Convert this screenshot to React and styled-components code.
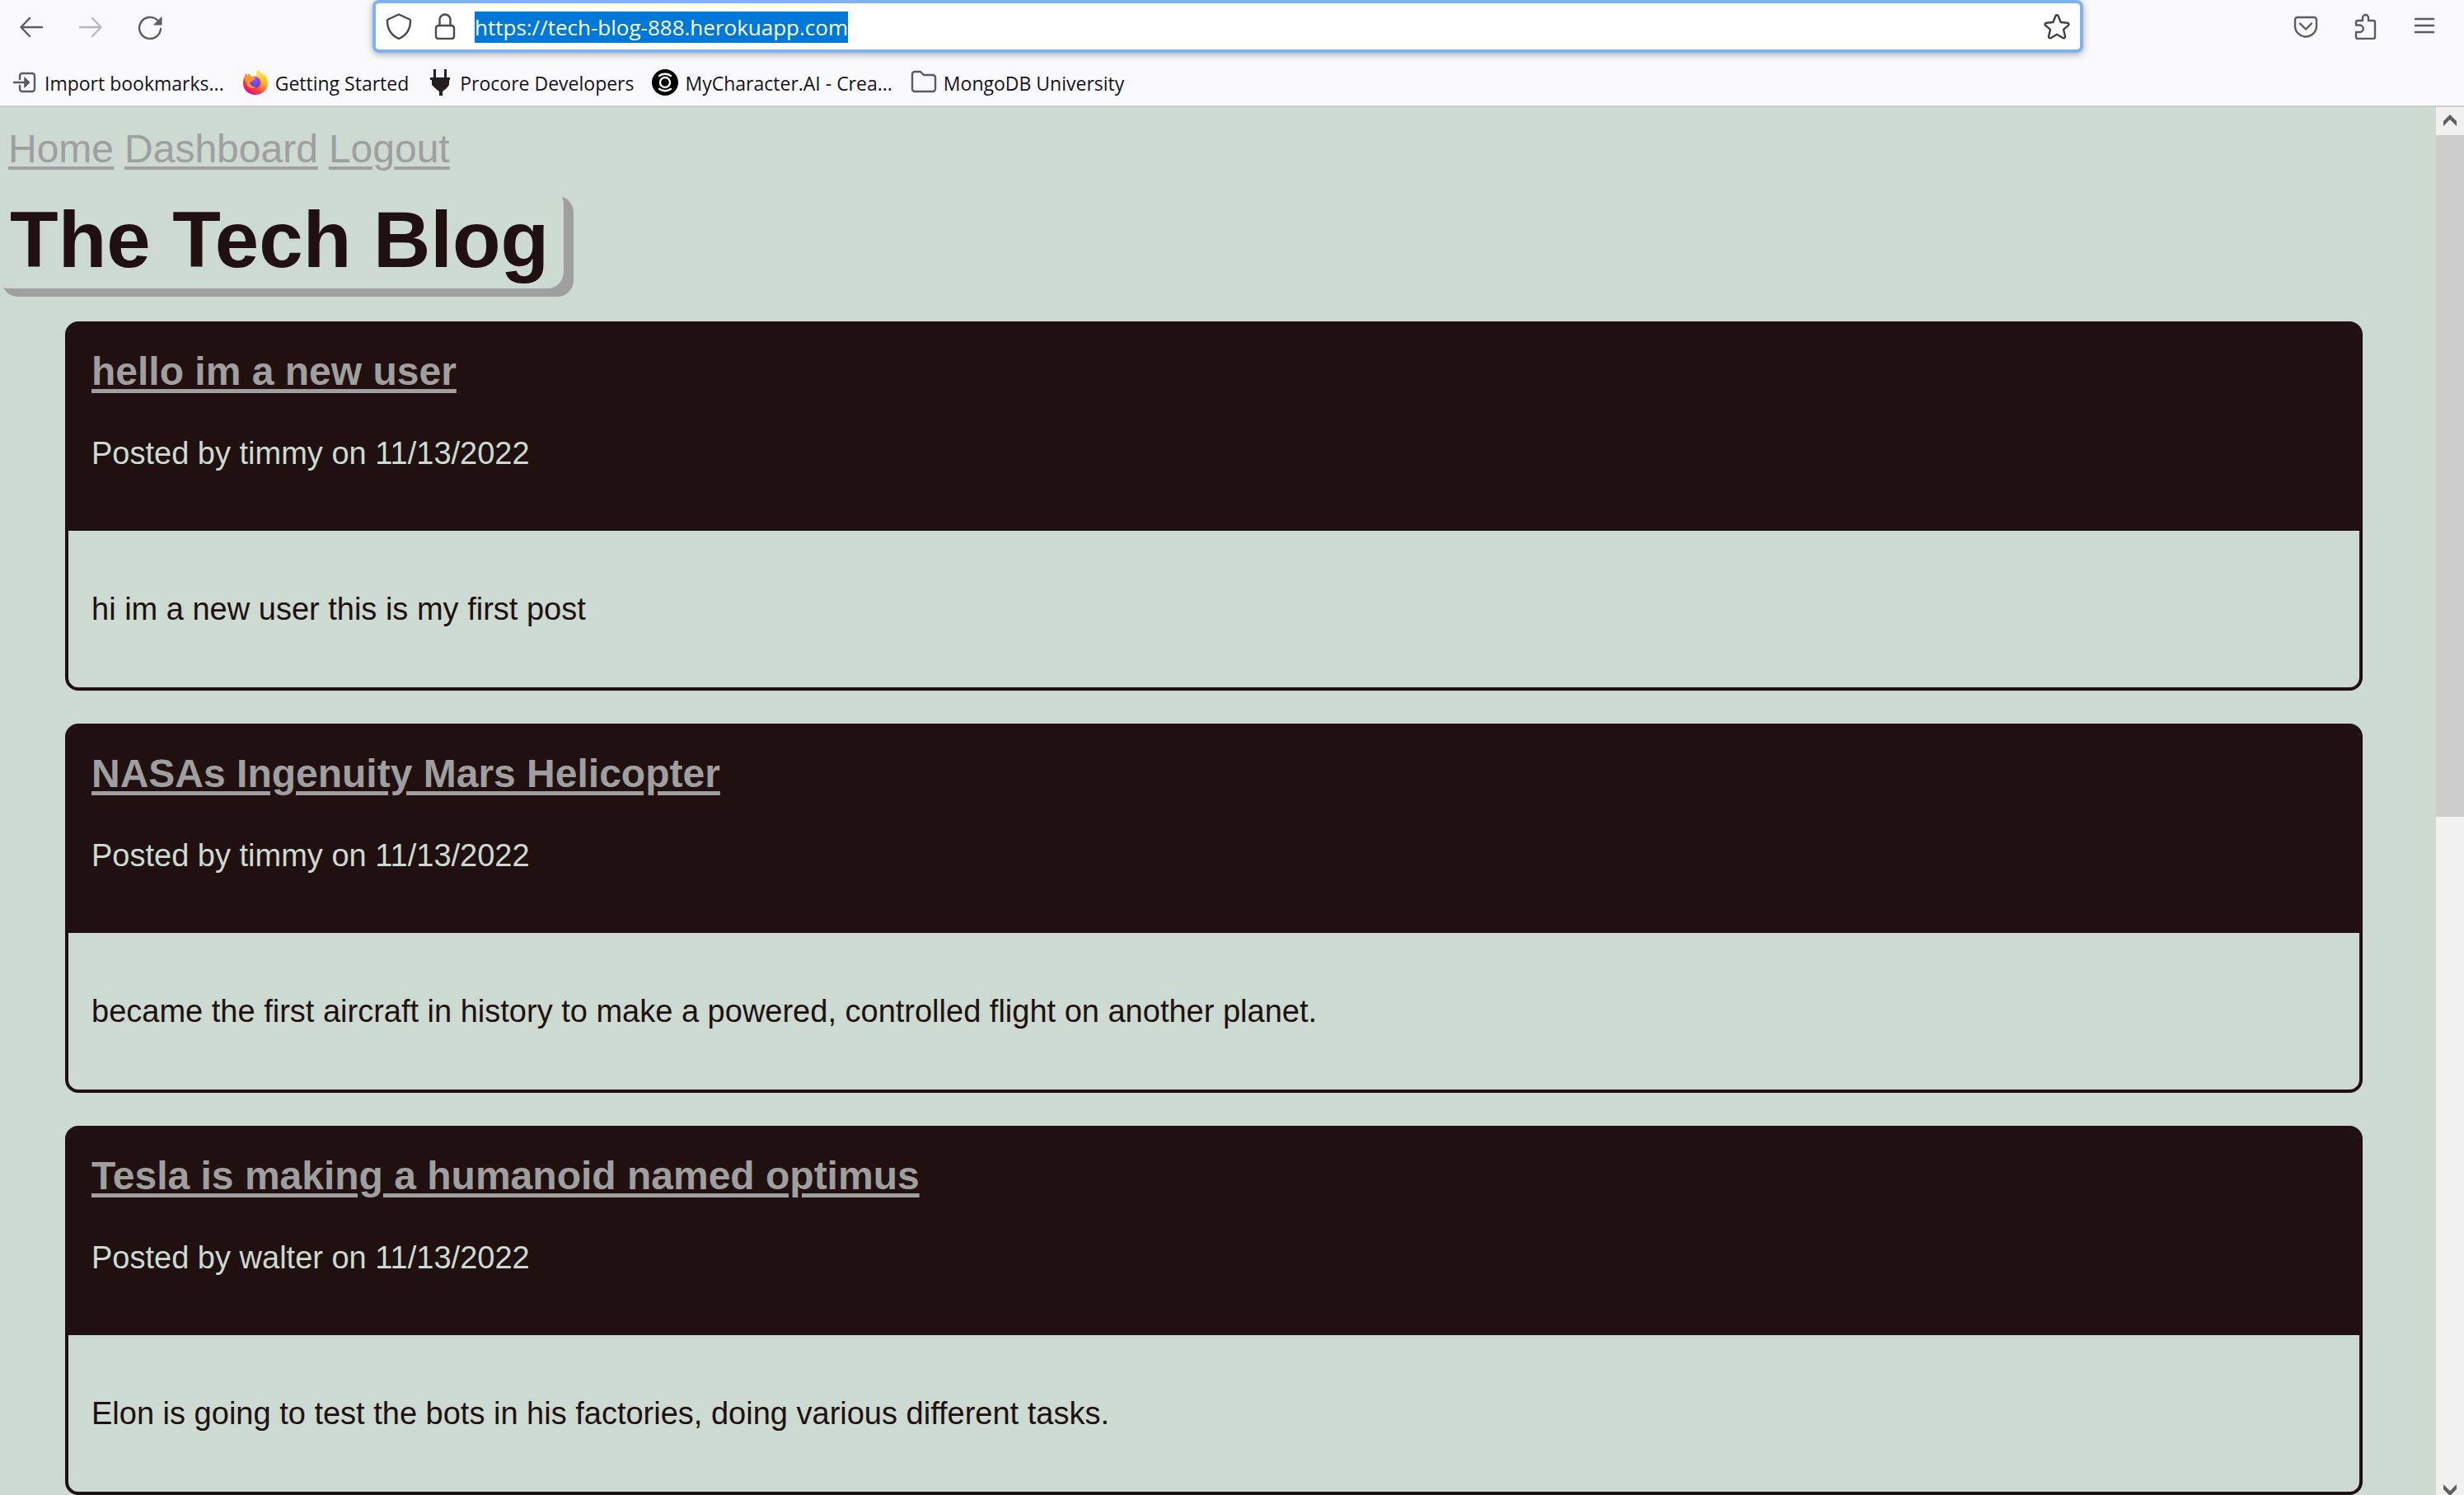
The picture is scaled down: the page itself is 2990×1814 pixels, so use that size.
import React, { useEffect, useRef } from "react";
import styled, { createGlobalStyle } from "styled-components";

const colors = {
  chrome: "#f9f9fb",
  chromeIcon: "#5b5b66",
  chromeText: "#15141a",
  mint: "#ccdad1",
  ink: "#211010",
  grey: "#a09fa0",
};

const GlobalStyle = createGlobalStyle`
  * { box-sizing: border-box; }
  body {
    margin: 0;
    background: ${colors.mint};
    font-family: "Liberation Sans", Arial, sans-serif;
  }
`;

const Window = styled.div`
  display: flex;
  flex-direction: column;
  height: 100vh;
  overflow: hidden;
`;

const Chrome = styled.header`
  flex: none;
  background: ${colors.chrome};
  border-bottom: 2px solid #cccccc;
  color: ${colors.chromeText};
  font-family: "Open Sans", "Noto Sans", sans-serif;
`;

const Toolbar = styled.div`
  display: flex;
  align-items: center;
  height: 64px;
  padding: 0 32px 0 22px;
`;

const ButtonGroup = styled.div`
  display: flex;
  gap: ${(p) => p.$gap || 40}px;
`;

const IconButton = styled.button`
  display: flex;
  padding: 0;
  border: 0;
  background: none;
  color: ${(p) => p.$color || colors.chromeIcon};
  opacity: ${(p) => (p.disabled ? 0.4 : 1)};
`;

const Icon = styled.svg.attrs({ viewBox: "0 0 32 32", "aria-hidden": true })`
  flex: none;
  width: 32px;
  height: 32px;
  fill: none;
  stroke: currentColor;
  stroke-width: 2.4;
  stroke-linecap: round;
  stroke-linejoin: round;
`;

const AddressBar = styled.form`
  display: flex;
  flex: 1;
  align-items: center;
  gap: 20px;
  height: 64px;
  margin: 0 254px;
  padding: 0 12px;
  border: 4px solid #80b1f2;
  border-radius: 8px;
  background: #ffffff;
  box-shadow: 0 2px 8px rgba(0, 0, 0, 0.3);
`;

const AddressInput = styled.input`
  flex: 1;
  min-width: 0;
  height: 38px;
  margin-top: 2px;
  padding: 0;
  border: 0;
  outline: 0;
  background: none;
  color: ${colors.chromeText};
  font-family: inherit;
  font-size: 26px;
  line-height: 38px;

  &::selection {
    background: #0078d7;
    color: #ffffff;
  }
`;

const Bookmarks = styled.nav`
  display: flex;
  align-items: center;
  gap: 22px;
  height: 64px;
  padding: 8px 14px 0;
`;

const Bookmark = styled.a`
  display: flex;
  align-items: center;
  gap: 8px;
  color: inherit;
  font-size: 23px;
  line-height: 32px;
  text-decoration: none;
  white-space: nowrap;
`;

const BookmarkLabel = styled.span`
  padding-top: 2px;
`;

const BookmarkIcon = styled(Icon)`
  color: ${colors.chromeIcon};
`;

const Viewport = styled.div`
  display: flex;
  flex: 1;
  min-height: 0;
`;

const Page = styled.div`
  flex: 1;
  min-width: 0;
  overflow: hidden;
  background: ${colors.mint};
  color: ${colors.ink};
`;

const SiteHeader = styled.header`
  padding-top: 23px;
`;

const SiteNav = styled.nav`
  display: flex;
  gap: 13px;
  padding-left: 10px;
  font-size: 48px;
  line-height: 56px;
`;

const SiteLink = styled.a`
  color: ${colors.grey};
  text-decoration-thickness: 4px;
  text-underline-offset: 5px;
`;

const SiteTitle = styled.h1`
  width: fit-content;
  margin: 19px 0 0 -10px;
  padding: 9px 18px 5px 22px;
  border-radius: 20px;
  box-shadow: 12px 10px 0 ${colors.grey};
  font-size: 96px;
  line-height: 108px;
`;

const PostList = styled.main`
  display: flex;
  flex-direction: column;
  gap: 40px;
  padding: 40px 89px 0 79px;
`;

const PostCard = styled.article`
  flex: none;
  border: 4px solid ${colors.ink};
  border-radius: 16px;
`;

const PostHeader = styled.header`
  padding: 29px 28px 72px;
  border-radius: 10px 10px 0 0;
  background: ${colors.ink};
  color: ${colors.mint};
`;

const PostTitle = styled.h2`
  margin: 0 0 49px;
  font-size: 48px;
  line-height: 56px;

  a {
    color: ${colors.grey};
    text-decoration-thickness: 5px;
    text-underline-offset: 5px;
  }
`;

const PostText = styled.p`
  margin: 0;
  font-size: 38px;
  line-height: 44px;
`;

const PostBody = styled.div`
  padding: 73px 28px;
`;

const ScrollTrack = styled.div`
  display: flex;
  flex: none;
  flex-direction: column;
  width: 34px;
  background: #f0f0f0;
`;

const ScrollButton = styled.button`
  display: flex;
  flex: none;
  align-items: flex-start;
  justify-content: center;
  height: ${(p) => p.$height}px;
  padding: 9px 0 0;
  border: 0;
  background: none;
`;

const ScrollArrow = styled.svg.attrs({ viewBox: "0 0 16 14", "aria-hidden": true })`
  flex: none;
  width: 16px;
  height: 14px;
  fill: #606060;
`;

const ScrollThumb = styled.div`
  flex: 33;
  background: #cdcdcd;
`;

const ScrollRest = styled.div`
  flex: 32;
`;

function FirefoxLogo() {
  return (
    <BookmarkIcon>
      <defs>
        <linearGradient id="fx-body" x1="0.85" y1="0.1" x2="0.2" y2="0.95">
          <stop offset="0" stopColor="#fff44f" />
          <stop offset="0.35" stopColor="#ffa436" />
          <stop offset="0.65" stopColor="#ff4a3f" />
          <stop offset="1" stopColor="#e6007e" />
        </linearGradient>
        <radialGradient id="fx-globe" cx="0.5" cy="0.3" r="0.7">
          <stop offset="0" stopColor="#9a4dff" />
          <stop offset="1" stopColor="#5a3fd0" />
        </radialGradient>
        <linearGradient id="fx-flame" x1="0" y1="0" x2="0" y2="1">
          <stop offset="0" stopColor="#fff44f" />
          <stop offset="1" stopColor="#ff980e" />
        </linearGradient>
      </defs>
      <g stroke="none">
        <path fill="url(#fx-body)" d="M20 0c-2 3-3 5-2 8l-7 1-3-4-1 3-3-3c0 3-3 6-3 12 0 8 7 14 15 14s15-6 15-14c0-5-2-9-5-11l1 3C25 5 21 4 20 0z" />
        <path fill="url(#fx-flame)" d="M20 0c-3 4-4 7 0 10 5 3 6 9 2 14 6-3 9-8 7-13-1-3-2-4-3-5l1 3C25 5 21 4 20 0z" />
        <circle cx="15.5" cy="16" r="6.6" fill="url(#fx-globe)" />
        <path fill="#ff9a2e" d="M3 9c3-2 8-1 9 1 2 0 4 0 4 1s-2 2-4 3c0 1-2 2-3 2 1 4 4 6 8 5-5 4-12 1-12-5-2-2-2-5-2-7z" />
      </g>
    </BookmarkIcon>
  );
}

const posts = [
  {
    title: "hello im a new user",
    meta: "Posted by timmy on 11/13/2022",
    body: "hi im a new user this is my first post",
  },
  {
    title: "NASAs Ingenuity Mars Helicopter",
    meta: "Posted by timmy on 11/13/2022",
    body: "became the first aircraft in history to make a powered, controlled flight on another planet.",
  },
  {
    title: "Tesla is making a humanoid named optimus",
    meta: "Posted by walter on 11/13/2022",
    body: "Elon is going to test the bots in his factories, doing various different tasks.",
  },
];

function BrowserChrome() {
  const address = useRef(null);

  useEffect(() => {
    address.current.focus();
    address.current.select();
  }, []);

  return (
    <Chrome>
      <Toolbar>
        <ButtonGroup>
          <IconButton type="button" aria-label="Back">
            <Icon><path d="M29 17H3.5M14 6 3.5 17 14 28" /></Icon>
          </IconButton>
          <IconButton type="button" aria-label="Forward" disabled>
            <Icon><path d="M3 17h25.5M18 6l10.5 11L18 28" /></Icon>
          </IconButton>
          <IconButton type="button" aria-label="Reload">
            <Icon>
              <path d="M29 19A13 13 0 1 1 25 8.5" />
              <path d="M30 5v9h-9z" fill="currentColor" strokeWidth="1" />
            </Icon>
          </IconButton>
        </ButtonGroup>
        <AddressBar onSubmit={(e) => e.preventDefault()}>
          <ButtonGroup $gap={24}>
            <IconButton type="button" aria-label="Tracking protection" $color="#4a4a4a">
              <Icon><path d="M16 1.5 29 7.5a2 2 0 0 1 1 1.5c0 11-5 18-14 22C7 27 2 20 2 9a2 2 0 0 1 1-1.500z" /></Icon>
            </IconButton>
            <IconButton type="button" aria-label="Connection secure" $color="#4a4a4a">
              <Icon>
                <rect x="5" y="15" width="22" height="16" rx="3" />
                <path d="M9.5 15V8a6.5 6.5 0 0 1 13 0v7" />
              </Icon>
            </IconButton>
          </ButtonGroup>
          <AddressInput
            ref={address}
            type="text"
            aria-label="Address"
            spellCheck={false}
            defaultValue="https://tech-blog-888.herokuapp.com"
          />
          <IconButton type="button" aria-label="Bookmark this page" $color="#3f3f46">
            <Icon><path d="M14.3 3.5c.7-1.600 2.700-1.600 3.400 0l3 7.500 8 .7c1.700.2 2.300 2 1.100 3.200L24 19.800l2 8.200c.3 1.700-1.300 2.800-2.800 2L16 25.800 8.800 30C7.300 30.800 5.700 29.700 6 28l2-8.200-5.800-4.900c-1.200-1.200-.6-3 1.100-3.200l8-.7z" /></Icon>
          </IconButton>
        </AddressBar>
        <ButtonGroup>
          <IconButton type="button" aria-label="Save to Pocket">
            <Icon>
              <path d="M6 5h20a3 3 0 0 1 3 3v7.5a13 13 0 0 1-26 0V8a3 3 0 0 1 3-3z" />
              <path d="m9 12.500 7 7 7-7" />
            </Icon>
          </IconButton>
          <IconButton type="button" aria-label="Extensions">
            <Icon><path d="M5 14.500V11a2 2 0 0 1 2-2h6V5.500a3.500 3.500 0 0 1 7 0V9h6a2 2 0 0 1 2 2v18a2 2 0 0 1-2 2H7a2 2 0 0 1-2-2v-6h4.500a4.200 4.200 0 0 0 0-8.500z" /></Icon>
          </IconButton>
          <IconButton type="button" aria-label="Open menu">
            <Icon><path d="M5 7h22M5 15h22M5 23h22" /></Icon>
          </IconButton>
        </ButtonGroup>
      </Toolbar>
      <Bookmarks aria-label="Bookmarks">
        <Bookmark href="#import">
          <BookmarkIcon>
            <path d="M10 12V8a3 3 0 0 1 3-3h12a3 3 0 0 1 3 3v16a3 3 0 0 1-3 3H13a3 3 0 0 1-3-3v-4M3 16h12" />
            <path d="m16 10 6 6-6 6z" fill="currentColor" strokeWidth="1" />
          </BookmarkIcon>
          <BookmarkLabel>Import bookmarks...</BookmarkLabel>
        </Bookmark>
        <Bookmark href="#getting-started">
          <FirefoxLogo />
          <BookmarkLabel>Getting Started</BookmarkLabel>
        </Bookmark>
        <Bookmark href="#procore">
          <BookmarkIcon>
            <path fill="#231f20" stroke="none" d="M8 0h3v10h10V0h3v10h4v3h-1v6l-3 4-5 4v5h-4v-5l-5-4-4-4v-6H4v-3h4z" />
          </BookmarkIcon>
          <BookmarkLabel>Procore Developers</BookmarkLabel>
        </Bookmark>
        <Bookmark href="#mycharacter">
          <BookmarkIcon>
            <circle cx="16" cy="16" r="16" fill="#000000" stroke="none" />
            <circle cx="16" cy="16" r="6" stroke="#ffffff" />
            <circle cx="16" cy="16" r="3" fill="#000000" stroke="none" />
            <path stroke="#ffffff" d="M9 8c4-3 10-3 14 0M9 24c4 3 10 3 14 0" />
          </BookmarkIcon>
          <BookmarkLabel>MyCharacter.AI - Crea...</BookmarkLabel>
        </Bookmark>
        <Bookmark href="#mongodb">
          <BookmarkIcon>
            <path d="M5 3h7l4 4h11a3 3 0 0 1 3 3v14a3 3 0 0 1-3 3H5a3 3 0 0 1-3-3V6a3 3 0 0 1 3-3z" />
          </BookmarkIcon>
          <BookmarkLabel>MongoDB University</BookmarkLabel>
        </Bookmark>
      </Bookmarks>
    </Chrome>
  );
}

function Post({ title, meta, body }) {
  return (
    <PostCard>
      <PostHeader>
        <PostTitle><a href="#post">{title}</a></PostTitle>
        <PostText>{meta}</PostText>
      </PostHeader>
      <PostBody>
        <PostText>{body}</PostText>
      </PostBody>
    </PostCard>
  );
}

export default function App() {
  return (
    <Window>
      <GlobalStyle />
      <BrowserChrome />
      <Viewport>
        <Page>
          <SiteHeader>
            <SiteNav>
              <SiteLink href="#home">Home</SiteLink>
              <SiteLink href="#dashboard">Dashboard</SiteLink>
              <SiteLink href="#logout">Logout</SiteLink>
            </SiteNav>
            <SiteTitle>The Tech Blog</SiteTitle>
          </SiteHeader>
          <PostList>
            {posts.map((post) => (
              <Post key={post.title} {...post} />
            ))}
          </PostList>
        </Page>
        <ScrollTrack>
          <ScrollButton type="button" aria-label="Scroll up" $height={34}>
            <ScrollArrow><path d="M8 0l8 8v6L8 6 0 14V8z" /></ScrollArrow>
          </ScrollButton>
          <ScrollThumb />
          <ScrollRest />
          <ScrollButton type="button" aria-label="Scroll down" $height={22}>
            <ScrollArrow><path d="M8 14l8-8V0L8 8 0 0v6z" /></ScrollArrow>
          </ScrollButton>
        </ScrollTrack>
      </Viewport>
    </Window>
  );
}
